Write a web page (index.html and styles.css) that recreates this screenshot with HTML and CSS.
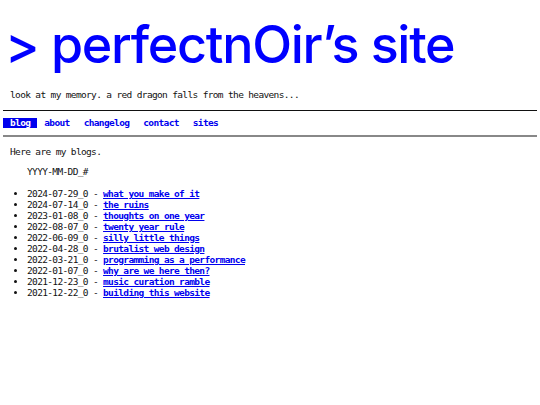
FILE: index.html
```html
<!DOCTYPE html>
<html>
<head>
<meta charset="utf-8">
<link rel="stylesheet" href="styles.css">
</head>
<body>
<header class="header">
  <h1 class="title">&gt; perfectnOir’s site</h1>
  <p class="tagline">look at my memory. a red dragon falls from the heavens...</p>
</header>
<nav class="nav">
  <a class="nav-link active" href="#">blog</a><a class="nav-link" href="#">about</a><a class="nav-link" href="#">changelog</a><a class="nav-link" href="#">contact</a><a class="nav-link" href="#">sites</a>
</nav>
<main class="content">
  <p class="intro">Here are my blogs.</p>
  <p class="format">YYYY-MM-DD_#</p>
  <ul class="posts">
    <li>2024-07-29_0 - <a href="#">what you make of it</a></li>
    <li>2024-07-14_0 - <a href="#">the ruins</a></li>
    <li>2023-01-08_0 - <a href="#">thoughts on one year</a></li>
    <li>2022-08-07_0 - <a href="#">twenty year rule</a></li>
    <li>2022-06-09_0 - <a href="#">silly little things</a></li>
    <li>2022-04-28_0 - <a href="#">brutalist web design</a></li>
    <li>2022-03-21_0 - <a href="#">programming as a performance</a></li>
    <li>2022-01-07_0 - <a href="#">why are we here then?</a></li>
    <li>2021-12-23_0 - <a href="#">music curation ramble</a></li>
    <li>2021-12-22_0 - <a href="#">building this website</a></li>
  </ul>
</main>
</body>
</html>
```
FILE: styles.css
```css
html, body {
  margin: 0;
  padding: 0;
  background: #fff;
}
body {
  padding: 0 3px;
  font-family: "DejaVu Sans Mono", monospace;
  font-size: 9.5px;
  letter-spacing: -0.65px;
  line-height: 11px;
  color: #111;
}
.header {
  padding-top: 19px;
}
.title {
  margin: 0;
  padding-left: 2px;
  font-family: Inter, "Noto Sans", sans-serif;
  font-weight: 500;
  font-size: 52px;
  line-height: 52px;
  color: #0000ff;
  letter-spacing: -1.3px;
}
.tagline {
  margin: 18px 0 0;
  padding-left: 7px;
}
.nav {
  margin-top: 10px;
  border-top: 1px solid #111;
  border-bottom: 2px solid #888;
  padding: 7px 0;
  display: flex;
}
.nav-link {
  display: inline-block;
  padding: 0 7px;
  line-height: 10px;
  font-weight: bold;
  color: #0000ee;
  text-decoration: none;
}
.nav-link.active {
  background: #0000ee;
  color: #fff;
}
.content {
  padding-left: 7px;
}
.intro {
  margin: 9px 0 0;
}
.format {
  margin: 9px 0 0;
  padding-left: 17px;
}
.posts {
  margin: 11px 0 0;
  padding-left: 17px;
  list-style: disc;
}
.posts a {
  color: #0000ee;
  font-weight: bold;
}
```
